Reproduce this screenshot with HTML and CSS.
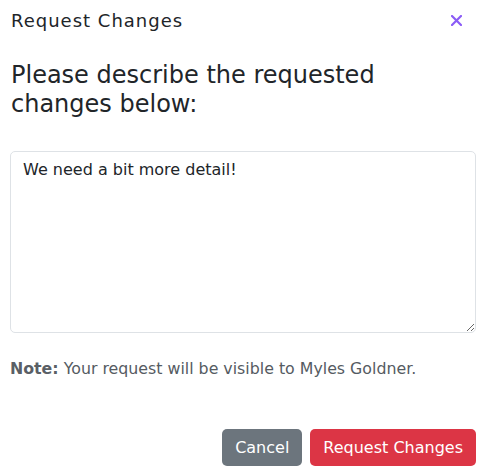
FILE: index.html
```html
<!DOCTYPE html>
<html>
<head>
<meta charset="utf-8">
<link rel="stylesheet" href="styles.css">
</head>
<body>
<div class="modal">
  <div class="header">
    <div class="title">Request Changes</div>
    <button class="close" aria-label="Close">
      <svg width="11" height="11" viewBox="0 0 11 11"><path d="M1 1L10 10M10 1L1 10" stroke="#8b5cf6" stroke-width="2.2" stroke-linecap="round"/></svg>
    </button>
  </div>
  <h2 class="prompt">Please describe the requested changes below:</h2>
  <textarea class="field">We need a bit more detail!</textarea>
  <p class="note"><strong>Note:</strong> Your request will be visible to Myles Goldner.</p>
  <div class="actions">
    <button class="btn btn-cancel">Cancel</button>
    <button class="btn btn-primary">Request Changes</button>
  </div>
</div>
</body>
</html>
```
FILE: styles.css
```css
html, body { margin: 0; padding: 0; background: #fff; }
body { font-family: "DejaVu Sans", sans-serif; color: #212529; }
.modal { width: 483px; padding: 0 7px 0 10px; box-sizing: border-box; }
.header { display: flex; align-items: center; justify-content: space-between; height: 41px; padding-left: 1px; }
.title { font-size: 18px; color: #212529; letter-spacing: 1px; }
.close { background: none; border: 0; padding: 0; margin-right: 14px; width: 11px; height: 11px; display: flex; }
.prompt { margin: 20px 0 0 1px; width: 400px; font-size: 24px; font-weight: normal; line-height: 29px; letter-spacing: 0; color: #212529; }
.field { display: block; margin-top: 32px; width: 466px; height: 182px; box-sizing: border-box; border: 1px solid #dee2e6; border-radius: 5px; padding: 8px 12px; font-family: inherit; font-size: 16px; color: #212529; resize: vertical; }
.note { margin: 26px 0 0 0; font-size: 15.8px; color: #555b62; }
.note strong { color: #5a5f66; }
.actions { display: flex; justify-content: flex-end; gap: 8px; margin-top: 51px; }
.btn { font-family: inherit; font-size: 16px; color: #fff; border: 0; border-radius: 5px; height: 37px; padding: 0 13px; }
.btn-cancel { background: #6c757d; }
.btn-primary { background: #dc3545; }
```
